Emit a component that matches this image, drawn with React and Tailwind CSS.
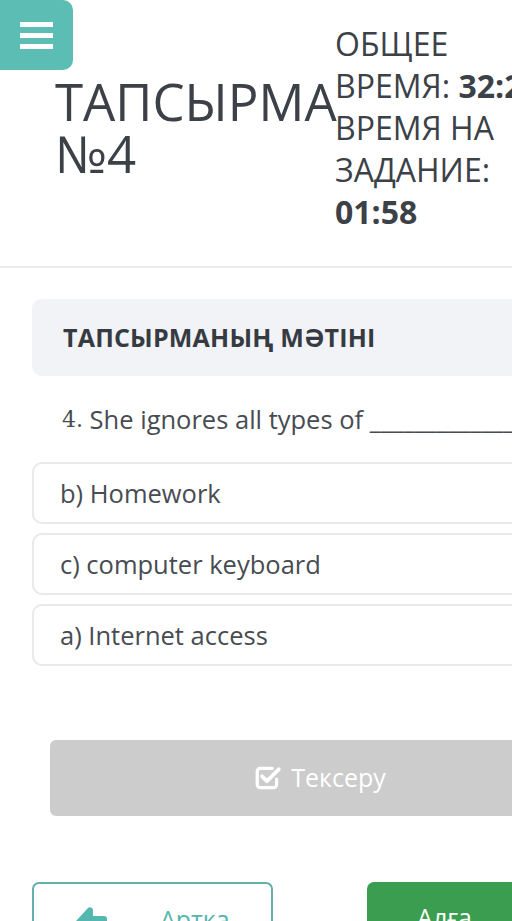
import React from "react";

function CheckSquare() {
  return (
    <svg width="28" height="26" viewBox="0 0 26 24" fill="none">
      <path d="M17 3H6a3 3 0 0 0-3 3v12a3 3 0 0 0 3 3h12a3 3 0 0 0 3-3v-5" stroke="white" strokeWidth="3" strokeLinecap="round" />
      <path d="M7.5 10.5l4.5 4.5L23 4" stroke="white" strokeWidth="3.6" strokeLinecap="round" strokeLinejoin="round" />
    </svg>
  );
}

function ArrowLeft() {
  return (
    <svg width="34" height="30" viewBox="0 0 34 30" fill="#55b8b0">
      <path d="M2 15 L14 2 a3 3 0 0 1 5 2 v6 h11 a3 3 0 0 1 3 3 v4 a3 3 0 0 1-3 3 h-11 v6 a3 3 0 0 1-5 2z" />
    </svg>
  );
}

function ArrowRight() {
  return (
    <svg width="34" height="30" viewBox="0 0 34 30" fill="white">
      <path d="M32 15 L20 2 a3 3 0 0 0-5 2 v6 h-11 a3 3 0 0 0-3 3 v4 a3 3 0 0 0 3 3 h11 v6 a3 3 0 0 0 5 2z" />
    </svg>
  );
}

export default function App() {
  const font = { fontFamily: '"Open Sans", "Noto Sans", sans-serif' };
  return (
    <div className="relative w-[512px] h-[921px] overflow-hidden bg-white text-[#3c4148]" style={font}>
      <div className="w-[640px]">
        <div className="flex items-center pl-[55px] pt-[23px] pb-[33px] border-b-2 border-[#ebecee]">
          <div className="w-[280px] text-[51px] leading-[52px] whitespace-nowrap -mt-[2px]">
            ТАПСЫРМА
            <br />
            №4
          </div>
          <div className="text-[32px] leading-[42px] whitespace-nowrap">
            ОБЩЕЕ
            <br />
            ВРЕМЯ: <b className="font-bold">32:24</b>
            <br />
            ВРЕМЯ НА
            <br />
            ЗАДАНИЕ:
            <br />
            <b className="font-bold">01:58</b>
          </div>
        </div>

        <div className="px-[32px] pt-[31px]">
          <div className="h-[77px] rounded-[9px] bg-[#f1f3f6] flex items-center pl-[31px]">
            <span className="text-[25px] font-bold text-[#363b41] tracking-[0.2px]">ТАПСЫРМАНЫҢ МӘТІНІ</span>
          </div>

          <div className="h-[86px] flex items-center pl-[30px] text-[25.5px] text-[#474c52]">
            <span style={{ fontFamily: '"DejaVu Serif", serif' }} className="text-[22px]">4.</span>
            <span>&nbsp;She ignores all types of ______________</span>
          </div>

          <div className="flex flex-col gap-[9px]">
            {["b) Homework", "c) computer keyboard", "a) Internet access"].map((t) => (
              <div key={t} className="h-[62px] rounded-[10px] border-2 border-[#e7e9eb] flex items-center pl-[26px] text-[25.5px] text-[#474c52]">
                {t}
              </div>
            ))}
          </div>

          <div className="px-[18px] pt-[74px]">
            <div className="h-[76px] rounded-[6px] bg-[#cccccc] flex items-center justify-center gap-[9px] text-white text-[25px]">
              <CheckSquare />
              <span>Тексеру</span>
            </div>
          </div>

          <div className="flex justify-between pt-[66px]">
            <div className="w-[241px] h-[70px] rounded-[7px] border-2 border-[#64aeab] flex items-start pt-[22px] pl-[40px] gap-[52px] text-[25px] text-[#55b5ae]">
              <ArrowLeft />
              <span className="-mt-[5px]">Артка</span>
            </div>
            <div className="w-[241px] h-[70px] rounded-[7px] bg-[#3b9d4f] flex items-start justify-center gap-[52px] pt-[17px] text-[25px] text-white">
              <span>Алға</span>
              <span className="mt-[5px]"><ArrowRight /></span>
            </div>
          </div>
        </div>
      </div>

      <div className="absolute left-0 top-0 w-[73px] h-[70px] bg-[#5bbdb3] rounded-r-[10px] flex flex-col items-center justify-center gap-[6px]">
        <div className="w-[33px] h-[5px] bg-white" />
        <div className="w-[33px] h-[5px] bg-white" />
        <div className="w-[33px] h-[5px] bg-white" />
      </div>
    </div>
  );
}
